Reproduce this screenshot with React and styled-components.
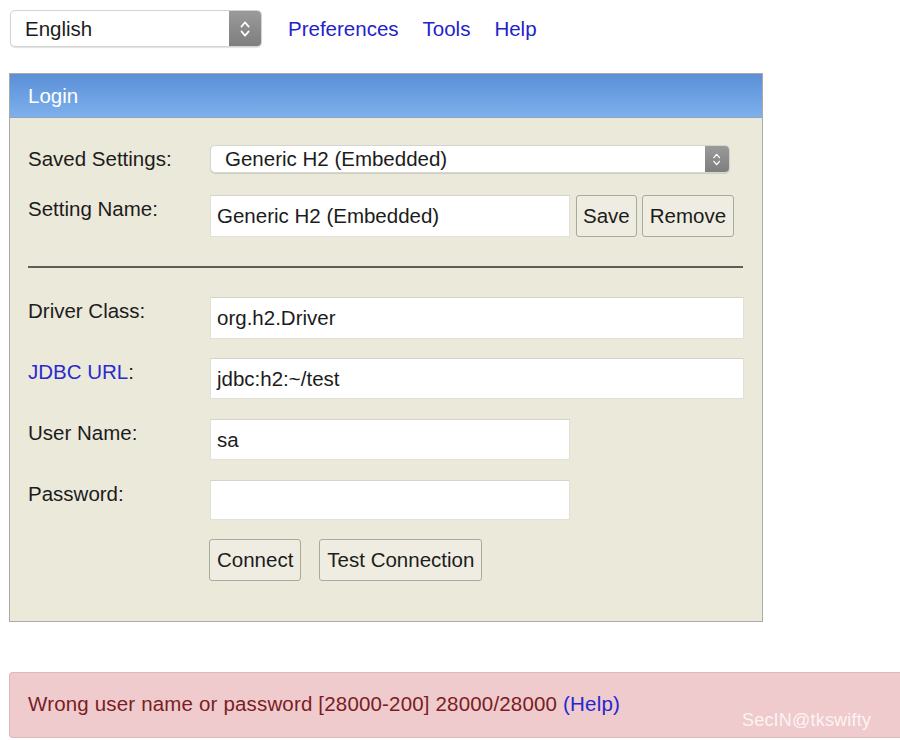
import React from 'react';
import styled, { createGlobalStyle } from 'styled-components';

const GlobalStyle = createGlobalStyle`
  html, body {
    margin: 0;
    padding: 0;
    background: #ffffff;
    overflow: hidden;
  }
  body {
    font-family: "Liberation Sans", Arial, sans-serif;
    font-size: 20.5px;
    color: #1c1c1c;
  }
`;

const Page = styled.div`
  padding: 10px 0 0 9px;
  width: 900px;
  box-sizing: border-box;
`;

const TopBar = styled.div`
  display: flex;
  align-items: center;
  height: 37px;
  margin-left: 1px;
`;

const NavLinks = styled.nav`
  display: flex;
  gap: 24px;
  margin-left: 26px;
`;

const NavLink = styled.a`
  color: #2323c9;
  text-decoration: none;
  cursor: pointer;
`;

const SelectBox = styled.div`
  display: flex;
  align-items: stretch;
  width: ${(p) => p.$width};
  height: ${(p) => p.$height}px;
  box-sizing: border-box;
  background: #ffffff;
  border: 1px solid #d4d4d0;
  border-radius: 5px;
  box-shadow: 0 1px 1px rgba(0, 0, 0, 0.12);
  overflow: hidden;
`;

const SelectText = styled.span`
  flex: 1;
  display: flex;
  align-items: center;
  padding-left: ${(p) => p.$pad}px;
  white-space: nowrap;
`;

const Stepper = styled.span`
  width: ${(p) => p.$width}px;
  display: flex;
  align-items: center;
  justify-content: center;
  background: linear-gradient(#9a9a9a, #7e7e7e);
`;

const Panel = styled.section`
  margin-top: 26px;
  width: 754px;
  box-sizing: border-box;
  border: 1px solid #aaaaa2;
  background: #ebe9da;
`;

const PanelHeader = styled.header`
  height: 43px;
  display: flex;
  align-items: center;
  padding-left: 18px;
  color: #ffffff;
  background: linear-gradient(#5b8fd7, #7db0ec);
  border-bottom: 1px solid #8aa4c4;
`;

const PanelBody = styled.div`
  padding: 27px 19px 40px 18px;
  display: flex;
  flex-direction: column;
`;

const Row = styled.div`
  display: grid;
  grid-template-columns: 182px 1fr;
  align-items: start;
  margin-top: ${(p) => p.$gap || 0}px;
`;

const Label = styled.label`
  line-height: 28px;
  color: #1c1c1c;
`;

const LinkPart = styled.span`
  color: #2a2ad0;
`;

const Field = styled.div`
  display: flex;
  align-items: center;
  gap: 6px;
`;

const TextInput = styled.div`
  width: ${(p) => p.$width};
  height: ${(p) => p.$height}px;
  box-sizing: border-box;
  background: #ffffff;
  border: 1px solid #e3e1d6;
  border-top-color: #d6d4c8;
  display: flex;
  align-items: center;
  padding-left: 6px;
  white-space: nowrap;
`;

const Button = styled.button`
  font: inherit;
  color: #1c1c1c;
  height: 42px;
  padding: 0 ${(p) => p.$pad || 6}px;
  background: #efede1;
  border: 1.5px solid #a9a99c;
  border-radius: 3px;
  cursor: pointer;
`;

const SmallButtons = styled.div`
  display: flex;
  gap: 5px;
`;

const Divider = styled.hr`
  margin: 29px 0 0 0;
  border: none;
  height: 2px;
  background: #5e5e58;
`;

const ButtonRow = styled.div`
  display: flex;
  gap: 18px;
  margin-top: 19px;
  margin-left: 181px;
`;

const Alert = styled.div`
  position: relative;
  margin-top: 50px;
  height: 66px;
  box-sizing: border-box;
  background: #efcbcd;
  border: 1px solid #e0b6ba;
  border-right: none;
  border-radius: 4px 0 0 4px;
  display: flex;
  align-items: center;
  padding: 0 0 2px 18px;
  color: #7a1d24;
  letter-spacing: 0.17px;
`;

const AlertLink = styled.a`
  color: #2727cf;
  text-decoration: none;
  margin-left: 6px;
`;

const Watermark = styled.span`
  position: absolute;
  left: 732px;
  top: 37px;
  font-size: 18px;
  color: rgba(255, 255, 255, 0.8);
  letter-spacing: 0.2px;
`;

const Chevrons = ({ size }) => (
  <svg width={size * 0.55} height={size} viewBox="0 0 10 18" fill="none">
    <path d="M2 7 L5 3.5 L8 7" stroke="#ffffff" strokeWidth="1.4" strokeLinecap="round" strokeLinejoin="round" />
    <path d="M2 11 L5 14.5 L8 11" stroke="#ffffff" strokeWidth="1.4" strokeLinecap="round" strokeLinejoin="round" />
  </svg>
);

export default function App() {
  return (
    <>
      <GlobalStyle />
      <Page>
        <TopBar>
          <SelectBox $width="252px" $height={37}>
            <SelectText $pad={14}>English</SelectText>
            <Stepper $width={32}>
              <Chevrons size={22} />
            </Stepper>
          </SelectBox>
          <NavLinks>
            <NavLink>Preferences</NavLink>
            <NavLink>Tools</NavLink>
            <NavLink>Help</NavLink>
          </NavLinks>
        </TopBar>

        <Panel>
          <PanelHeader>Login</PanelHeader>
          <PanelBody>
            <Row>
              <Label>Saved Settings:</Label>
              <SelectBox $width="520px" $height={28}>
                <SelectText $pad={14}>Generic H2 (Embedded)</SelectText>
                <Stepper $width={24}>
                  <Chevrons size={17} />
                </Stepper>
              </SelectBox>
            </Row>
            <Row $gap={22}>
              <Label>Setting Name:</Label>
              <Field>
                <TextInput $width="360px" $height={42}>Generic H2 (Embedded)</TextInput>
                <SmallButtons>
                  <Button>Save</Button>
                  <Button $pad={7}>Remove</Button>
                </SmallButtons>
              </Field>
            </Row>

            <Divider />

            <Row $gap={29}>
              <Label>Driver Class:</Label>
              <TextInput $width="534px" $height={42}>org.h2.Driver</TextInput>
            </Row>
            <Row $gap={19}>
              <Label>
                <LinkPart>JDBC URL</LinkPart>:
              </Label>
              <TextInput $width="534px" $height={41}>jdbc:h2:~/test</TextInput>
            </Row>
            <Row $gap={20}>
              <Label>User Name:</Label>
              <TextInput $width="360px" $height={41}>sa</TextInput>
            </Row>
            <Row $gap={20}>
              <Label>Password:</Label>
              <TextInput $width="360px" $height={40} />
            </Row>

            <ButtonRow>
              <Button $pad={7}>Connect</Button>
              <Button $pad={7}>Test Connection</Button>
            </ButtonRow>
          </PanelBody>
        </Panel>

        <Alert>
          Wrong user name or password [28000-200] 28000/28000
          <AlertLink>(Help)</AlertLink>
          <Watermark>SecIN@tkswifty</Watermark>
        </Alert>
      </Page>
    </>
  );
}
